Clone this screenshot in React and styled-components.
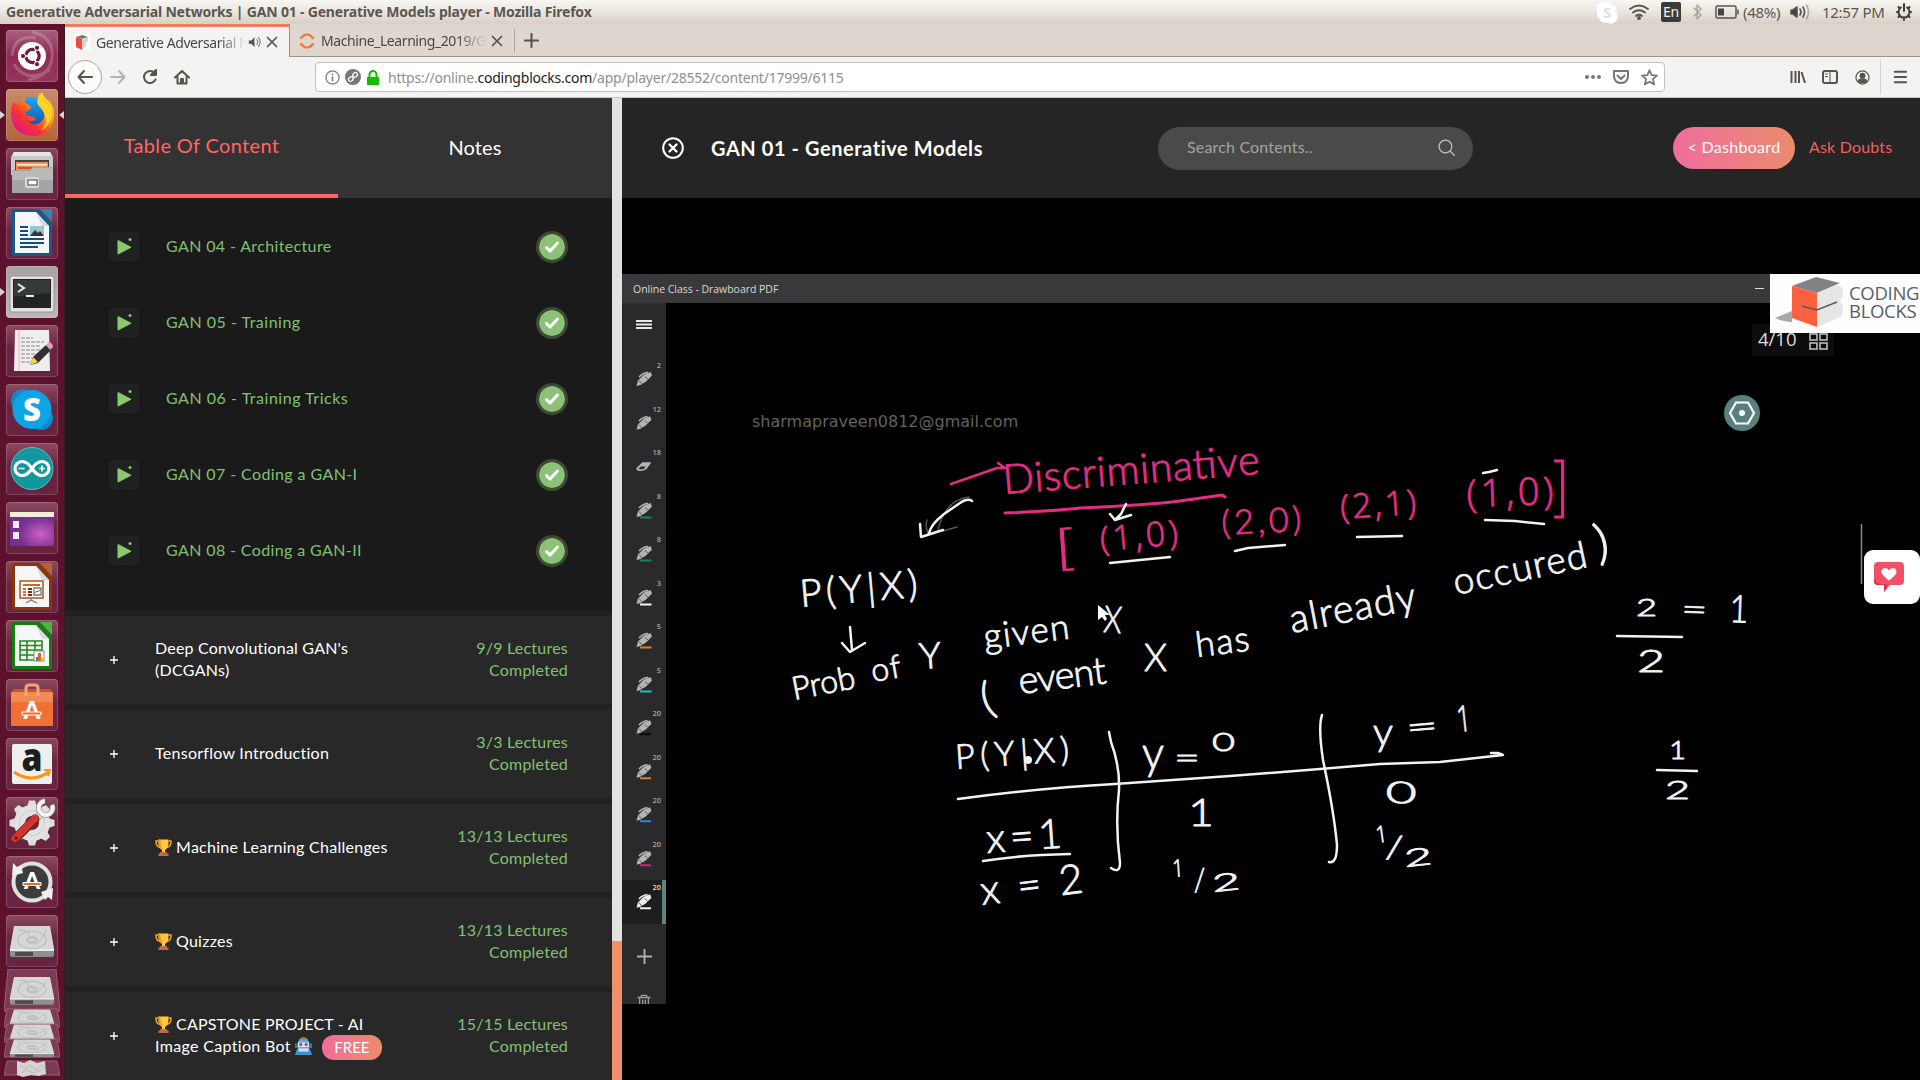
import React from "react";
import styled, { createGlobalStyle, css } from "styled-components";

const Global = createGlobalStyle`
  * { box-sizing: border-box; }
  body { margin: 0; background: #000; overflow: hidden; }
`;

const uiFont = `"Noto Sans", "Open Sans", sans-serif`;
const pageFont = `Lato, "Open Sans", sans-serif`;

/* ---------- desktop shell ---------- */

const Desktop = styled.div`
  width: 1920px;
  height: 1080px;
  display: grid;
  grid-template-rows: 24px 1056px;
  overflow: hidden;
  font-family: ${uiFont};
`;

const TopPanel = styled.header`
  display: flex;
  align-items: center;
  justify-content: space-between;
  padding: 0 8px 0 6px;
  background: linear-gradient(#f8f6f3, #ece7e1 45%, #d8cfc5);
  color: #5b5650;
`;

const WindowTitle = styled.div`
  font-size: 14px;
  font-weight: 700;
  line-height: 24px;
  letter-spacing: -0.19px;
  white-space: nowrap;
`;

const Indicators = styled.div`
  display: flex;
  align-items: center;
  height: 24px;
  font-size: 15px;
  letter-spacing: -0.3px;
  svg { display: block; }
`;

const Indicator = styled.span`
  display: flex;
  align-items: center;
  margin-left: ${(p) => p.$gap || 0}px;
  width: ${(p) => (p.$w ? p.$w + "px" : "auto")};
  white-space: nowrap;
`;

const LangBox = styled.span`
  width: 20px;
  height: 20px;
  margin-left: 12px;
  border-radius: 2px;
  background: #3c3b39;
  color: #f3f0ec;
  font-size: 14px;
  line-height: 20px;
  text-align: center;
`;

const Workspace = styled.div`
  display: grid;
  grid-template-columns: 65px 1855px;
  min-height: 0;
`;

const Launcher = styled.nav`
  display: flex;
  flex-direction: column;
  align-items: flex-start;
  gap: 7px;
  padding: 6px 0 0 6px;
  background: #5c112c;
  border-right: 1px solid #3c1622;
  overflow: hidden;
`;

const tileTones = {
  plain: "linear-gradient(#8b4a60, #6b2440 45%, #672340)",
  dash: "linear-gradient(#a8607c, #8e2c54 50%, #96365c)",
  firefox: "linear-gradient(#c98c6c, #b2643c)",
  terminal: "linear-gradient(#aaa0a4, #bdb6b9)",
};

const Tile = styled.div`
  position: relative;
  flex: none;
  width: 52px;
  height: 52px;
  border-radius: 4px;
  background: ${(p) => tileTones[p.$tone || "plain"]};
  box-shadow: inset 0 0 0 1px rgba(255, 255, 255, 0.17);
  svg { display: block; width: 52px; height: 52px; overflow: visible; }
`;

const Pip = styled.i`
  position: absolute;
  top: 22px;
  border: 4px solid transparent;
  ${(p) => p.$side === "left"
    ? css`left: -6px; border-left: 5px solid #d9d3d3; border-right: 0;`
    : css`right: -6px; border-right: 5px solid #d9d3d3; border-left: 0;`}
`;

const DriveStack = styled.svg`
  flex: none;
  margin: -5px 0 0 -2px;
`;

/* ---------- browser ---------- */

const Browser = styled.main`
  display: grid;
  grid-template-rows: 33px 41px 982px;
  min-width: 0;
`;

const TabStrip = styled.div`
  display: flex;
  background: #dfd6d0;
  border-bottom: 1px solid #99928d;
`;

const BrowserTab = styled.div`
  display: flex;
  align-items: center;
  width: ${(p) => p.$w}px;
  height: ${(p) => (p.$active ? 33 : 32)}px;
  padding: ${(p) => (p.$active ? "0 11px 0 9px" : "1px 11px 0 9px")};
  ${(p) => p.$active && css`
    background: #f4f3f2;
    border-top: 3px solid #ed7f58;
    border-right: 1px solid #99928d;
  `}
  svg { flex: none; }
`;

const TabLabel = styled.span`
  flex: none;
  width: ${(p) => p.$w}px;
  margin-left: 6px;
  overflow: hidden;
  white-space: nowrap;
  font-size: 14px;
  letter-spacing: -0.42px;
  color: #4a4744;
  mask-image: linear-gradient(90deg, #000 82%, transparent);
`;

const TabActions = styled.span`
  display: flex;
  align-items: center;
  gap: 5px;
  margin-left: auto;
`;

const TabDivider = styled.i`
  width: 1px;
  height: 24px;
  margin: 5px 8px 0 0;
  background: #aca49e;
`;

const PlusTab = styled.span`
  display: grid;
  place-items: center;
  width: 16px;
  height: 32px;
`;

const NavBar = styled.div`
  display: flex;
  align-items: center;
  background: #f4f3f1;
  border-bottom: 1px solid #c9c5c1;
  svg { flex: none; }
`;

const BackButton = styled.div`
  display: grid;
  place-items: center;
  width: 34px;
  height: 34px;
  margin-left: 3px;
  border: 1px solid #aaa6a2;
  border-radius: 50%;
  background: #fcfcfb;
`;

const NavIcon = styled.span`
  display: grid;
  place-items: center;
  width: 32px;
  height: 32px;
`;

const AddressBar = styled.div`
  display: flex;
  align-items: center;
  width: 1350px;
  height: 30px;
  margin-left: 117px;
  padding: 0 6px 0 9px;
  background: #fff;
  border: 1px solid #c3bfbb;
  border-radius: 4px;
`;

const UrlText = styled.span`
  flex: 1;
  margin-left: 8px;
  font-size: 14px;
  letter-spacing: -0.23px;
  color: #8f8f8f;
  b { font-weight: 400; color: #222; }
`;

const UrlActions = styled.span`
  display: flex;
  align-items: center;
  gap: 12px;
`;

const NavTail = styled.div`
  display: flex;
  align-items: center;
  margin-left: 117px;
`;

const NavSeparator = styled.i`
  width: 1px;
  height: 34px;
  margin: 0 3px 0 2px;
  background: #d6d3d0;
`;

/* ---------- course page ---------- */

const Page = styled.div`
  display: grid;
  grid-template-columns: 547px 10px 1298px;
  min-height: 0;
  font-family: ${pageFont};
`;

const Sidebar = styled.aside`
  display: flex;
  flex-direction: column;
  overflow: hidden;
  background: #282828;
`;

const SideTabs = styled.div`
  display: flex;
  flex: none;
  height: 100px;
  background: #333;
`;

const SideTab = styled.div`
  display: flex;
  align-items: center;
  justify-content: center;
  width: ${(p) => (p.$active ? 273 : 274)}px;
  padding-bottom: 2px;
  font-size: 20px;
  letter-spacing: ${(p) => (p.$active ? "0.35px" : "0.1px")};
  color: ${(p) => (p.$active ? "#ff6666" : "#fff")};
  border-bottom: ${(p) => (p.$active ? "4px solid #ff6666" : "0")};
`;

const LessonList = styled.div`
  flex: none;
  height: 412px;
  padding-top: 10px;
  background: #1a1a1a;
`;

const Lesson = styled.div`
  display: flex;
  align-items: center;
  height: 76px;
  padding: 0 44px;
  color: #82c073;
  font-size: 16px;
`;

const PlayBox = styled.span`
  display: grid;
  place-items: center;
  width: 30px;
  height: 29px;
  border-radius: 5px;
  background: #202121;
`;

const LessonName = styled.span`
  flex: 1;
  margin: -2px 0 0 27px;
  letter-spacing: ${(p) => p.$track}px;
`;

const DoneBadge = styled.span`
  display: grid;
  place-items: center;
  width: 32px;
  height: 32px;
  margin-top: 2px;
  border-radius: 50%;
  border: 3px solid #3d4b36;
  background: #8dc178;
  background-clip: padding-box;
`;

const Section = styled.div`
  display: flex;
  align-items: center;
  flex: none;
  height: 94px;
  padding: 0 44px 2px 45px;
  border-top: 6px solid #212121;
  background: #282828;
  color: #fff;
  font-size: 16px;
  line-height: 22px;
`;

const Expand = styled.span`
  width: 45px;
  padding-top: 1px;
  svg { display: block; }
`;

const SectionTitle = styled.div`
  flex: 1;
`;

const TitleLine = styled.div`
  display: flex;
  align-items: center;
  height: 22px;
  letter-spacing: ${(p) => p.$track || 0.22}px;
  white-space: pre;
  > svg { flex: none; margin-right: 4px; }
`;

const Progress = styled.div`
  width: 120px;
  text-align: right;
  letter-spacing: 0.22px;
  color: #82c073;
`;

const FreeBadge = styled.span`
  height: 25px;
  margin: 2px 0 0 6px;
  padding: 0 12px;
  border-radius: 12px;
  background: linear-gradient(90deg, #ee6e9d, #ec8b6c);
  font-size: 15px;
  line-height: 24px;
  letter-spacing: 0;
`;

const ScrollTrack = styled.div`
  display: flex;
  flex-direction: column;
  justify-content: flex-end;
  background: #e3e2e1;
`;

const ScrollThumb = styled.div`
  height: 139px;
  background: #f08f69;
`;

const Player = styled.section`
  display: flex;
  flex-direction: column;
  background: #000;
  min-width: 0;
`;

const PlayerHeader = styled.header`
  display: flex;
  align-items: center;
  height: 100px;
  padding-left: 40px;
  background: #252525;
`;

const LectureTitle = styled.h1`
  width: 447px;
  margin: -1px 0 0 27px;
  font-size: 20px;
  font-weight: 700;
  letter-spacing: 0.56px;
  color: #fff;
`;

const SearchBox = styled.div`
  display: flex;
  align-items: center;
  justify-content: space-between;
  width: 315px;
  height: 43px;
  padding: 0 18px 2px 29px;
  border-radius: 22px;
  background: #4a4a4a;
  color: #a3a3a3;
  font-size: 16px;
  line-height: 20px;
  letter-spacing: 0.17px;
`;

const DashboardButton = styled.div`
  width: 122px;
  height: 42px;
  margin-left: 200px;
  border-radius: 21px;
  background: linear-gradient(90deg, #ee6e9d, #ec8b6c);
  color: #fff;
  font-size: 16px;
  line-height: 40px;
  letter-spacing: 0.3px;
  text-align: center;
  white-space: nowrap;
`;

const AskLink = styled.div`
  margin: -3px 0 0 14px;
  color: #f0605e;
  font-size: 16px;
  letter-spacing: 0.18px;
  white-space: nowrap;
`;

const Video = styled.div`
  position: relative;
  flex: 1;
  padding-top: 76px;
  background: #000;
`;

const BoardTitle = styled.div`
  display: flex;
  align-items: center;
  height: 29px;
  padding-left: 11px;
  background: #39393b;
  color: #d8d8d8;
  font-family: "Open Sans", sans-serif;
  font-size: 10.5px;
  letter-spacing: -0.03px;
`;

const Minimize = styled.i`
  width: 9px;
  height: 1px;
  margin-left: auto;
  margin-right: 156px;
  background: #ddd;
`;

const Board = styled.div`
  display: grid;
  grid-template-columns: 44px 1254px;
  height: 701px;
`;

const ToolRail = styled.div`
  display: flex;
  flex-direction: column;
  overflow: hidden;
  background: #2a2a2c;
`;

const RailTop = styled.div`
  flex: none;
  display: grid;
  place-items: center;
  height: ${(p) => p.$h}px;
`;

const Tool = styled.div`
  display: flex;
  flex: none;
  align-items: flex-start;
  justify-content: space-between;
  height: 43.5px;
  padding: 3px 5px 0 14px;
  color: #a5a5a5;
  font-family: "Open Sans", sans-serif;
  font-size: 7.5px;
  font-weight: 600;
  line-height: 9px;
  ${(p) => p.$active && css`
    background: #1e1e1f;
    color: #ddd;
    border-right: 4px solid #5b8583;
    padding-right: 1px;
  `}
  svg { margin-top: 10px; }
`;

const Overlay = styled.div`
  position: absolute;
  left: ${(p) => p.$x}px;
  top: ${(p) => p.$y}px;
`;

const Watermark = styled(Overlay)`
  font-family: "DejaVu Sans", sans-serif;
  font-size: 16px;
  line-height: 20px;
  color: #626262;
`;

const PageCounter = styled(Overlay)`
  display: flex;
  align-items: flex-start;
  gap: 12px;
  width: 82px;
  height: 32px;
  padding-left: 6px;
  background: #0d0d0d;
  color: #dedede;
  font-family: "Open Sans", sans-serif;
  font-size: 18.5px;
  line-height: 29px;
  svg { margin-top: 9px; }
`;

const BrandCard = styled(Overlay)`
  display: flex;
  align-items: center;
  width: 150px;
  height: 59px;
  padding-bottom: 3px;
  background: #fefefe;
`;

const BrandName = styled.div`
  margin-left: 6px;
  color: #595d69;
  font-family: "Open Sans", sans-serif;
  font-size: 18.5px;
  line-height: 18px;
  letter-spacing: -0.3px;
  white-space: pre-line;
`;

const FeedbackCard = styled(Overlay)`
  display: flex;
  align-items: center;
  width: 56px;
  height: 54px;
  padding-left: 10px;
  border-radius: 9px;
  background: #fff;
`;

/* ---------- launcher art ---------- */

const Drive = ({ y = 0, s = 1 }) => (
  <g transform={`translate(0 ${y}) scale(1 ${s})`}>
    <path d="M8 12h36l4 22v6q0 2-2 2H6q-2 0-2-2v-6z" fill="#8f8f8f" />
    <path d="M8 11h36l4 23H4z" fill="#d6d6d6" />
    <path d="M4 34h44v2H4z" fill="#ececec" />
    <path d="M9 37h18v4H9z" fill="#4b4b4b" />
    <ellipse cx="26" cy="25" rx="14" ry="9" fill="none" stroke="#bdbdbd" strokeWidth="1.2" />
    <ellipse cx="26" cy="25" rx="5" ry="3" fill="#cfcfcf" stroke="#a6a6a6" />
    <path d="M12 15q14 0 10 6M40 15q-4 12-12 15" fill="none" stroke="#b9b9b9" />
  </g>
);

const OfficeSheet = ({ color, corner, children }) => (
  <g>
    <path d="M8 2h25l13 14v33H8q-2 0-2-2V4q0-2 2-2z" fill={color} />
    <path d="M34 2h12v13z" fill={corner} />
    <path d="M9 5h21l13 14v27H9z" fill="#f6f6f6" />
    <path d="M30 5l13 14h-7z" fill="#ccd" opacity=".7" />
    {children}
  </g>
);

const gearTeeth = [0, 45, 90, 135, 180, 225, 270, 315];

const art = {
  dash: (
    <g>
      <path d="M26 2Q48 6 46 28Q44 46 22 50M6 26Q8 4 30 8M44 40Q20 54 8 34" fill="none" stroke="#fff" strokeWidth="3" opacity=".2" />
      <circle cx="26" cy="26" r="14" fill="#fff" />
      <circle cx="26.5" cy="26" r="6.7" fill="none" stroke="#6c1f40" strokeWidth="3.2" />
      <path d="M26.5 26L18 26M26.5 26L31 18.500M26.500 26L31 33.500" stroke="#fff" strokeWidth="1.500" />
      <circle cx="26.500" cy="26" r="4.500" fill="#fff" />
      <g fill="#6c1f40" stroke="#fff" strokeWidth="1"><circle cx="17" cy="26" r="2.600" /><circle cx="31" cy="17.800" r="2.600" /><circle cx="31" cy="34.200" r="2.600" /></g>
    </g>
  ),
  firefox: (
    <g>
      <defs>
        <linearGradient id="fx" x1="0.9" y1="0.1" x2="0.2" y2="0.9"><stop offset="0" stopColor="#ffe226" /><stop offset=".35" stopColor="#ff9a1a" /><stop offset=".7" stopColor="#f8352f" /><stop offset="1" stopColor="#e01a80" /></linearGradient>
        <linearGradient id="fb" x1="0" y1="0" x2="0" y2="1"><stop offset="0" stopColor="#16aaf5" /><stop offset="1" stopColor="#1e3796" /></linearGradient>
      </defs>
      <circle cx="26" cy="27" r="19" fill="url(#fb)" />
      <path d="M7 12q2 3 4 3q4-5 9-6q-2 3-1 5q4 1 6 4q0 3-5 4q-2 4 3 5q4 0 7 3q-4 4-9 1q5 7 13 3q7-5 3-14q-2-4-6-6q0-6 5-11q2 6 7 9q6 6 5 16q-2 19-21 19q-21-1-22-22q0-7 2-13z" fill="url(#fx)" />
      <path d="M34 4q2 6 7 10q7 7 4 17q-4 8-10 10q8-8 3-17q-3-5-6-8q-1-7 2-12z" fill="#ffd927" opacity=".85" />
    </g>
  ),
  files: (
    <g>
      <path d="M8 4h36l3 5v18H5V9z" fill="#c9c9c7" /><path d="M8 4h36l2 4H6z" fill="#e6e6e4" />
      <path d="M9 12h34v11H9z" fill="#474340" /><path d="M10 14h32v8H10z" fill="#ec9156" /><path d="M11 16h30v1.500H11z" fill="#fff3e2" /><path d="M12 19h28v2H12z" fill="#c9532b" />
      <path d="M6 22h17l4-3h20v26H6z" fill="#a5a5a3" /><path d="M6 23h18l3-3h20v12H6z" fill="#b9b9b7" />
      <rect x="19" y="29" width="14" height="11" rx="2" fill="#d8d8d6" /><rect x="22" y="32" width="9" height="5" fill="#fff" stroke="#444" />
    </g>
  ),
  writer: (
    <OfficeSheet color="#155a8a" corner="#3483b0">
      <path d="M14 20h8M14 24h8M14 28h8M14 32h24M14 36h24M14 40h18" stroke="#12507e" strokeWidth="2" />
      <rect x="24" y="19" width="14" height="10" fill="#8cc6e8" /><path d="M24 29l5-6 3 3 2-2 4 5z" fill="#333" /><circle cx="34" cy="22" r="1.500" fill="#f5b93c" />
    </OfficeSheet>
  ),
  terminal: (
    <g>
      <rect x="4" y="10" width="44" height="36" rx="2" fill="#e2e0e0" stroke="#99959a" /><rect x="7" y="13" width="38" height="29" fill="#222424" />
      <path d="M8 14h36v13L8 31z" fill="#41484a" opacity=".6" /><path d="M12 18l6 4-6 4" fill="none" stroke="#eee" strokeWidth="2" /><path d="M20 30h8" stroke="#eee" strokeWidth="2" />
    </g>
  ),
  editor: (
    <g>
      <path d="M9 5h34l1 41H8z" fill="#eee" /><path d="M13 5v41" stroke="#f5b3b3" />
      <path d="M15 13h12M15 17h23M15 21h20M15 25h22M15 29h18M15 33h13M15 37h10" stroke="#aaa" strokeWidth="1.300" strokeDasharray="4 1" />
      <path d="M24 40l3-8 13-12 5 5-13 13z" fill="#303030" /><path d="M24 40l3-8 5 5z" fill="#f0d34c" /><path d="M40 20l3-3q4 1 4 5l-3 3z" fill="#eb9bc0" />
    </g>
  ),
  skype: (
    <g>
      <circle cx="17" cy="17" r="12" fill="#1388c8" /><circle cx="35" cy="34" r="12" fill="#1388c8" /><circle cx="26" cy="25.500" r="19.500" fill="#0ea5e6" />
      <text x="26" y="37" textAnchor="middle" fontFamily="Open Sans" fontWeight="800" fontSize="31" fill="#fff">S</text>
    </g>
  ),
  arduino: (
    <g>
      <circle cx="26" cy="25.500" r="21" fill="#12979c" stroke="#5fbcc0" />
      <path d="M26 25.500c-4-6-7-7-10-7a7 7 0 000 14c3 0 6-1 10-7s7-7 10-7a7 7 0 010 14c-3 0-6-1-10-7z" fill="none" stroke="#fff" strokeWidth="3.200" />
      <path d="M12.500 25.500h6M33 25.500h6M36 22.500v6" stroke="#fff" strokeWidth="1.600" />
    </g>
  ),
  desktops: (
    <g>
      <defs><radialGradient id="dk" cx=".7" cy=".65"><stop offset="0" stopColor="#cf5fc3" /><stop offset="1" stopColor="#743091" /></radialGradient></defs>
      <rect x="4" y="10" width="44" height="34" fill="url(#dk)" /><path d="M4 10h44v5H4z" fill="#f0edd8" />
      <path d="M7 19h6v7H7zM7 30h6v7H7z" fill="#f2eef2" />
    </g>
  ),
  impress: (
    <OfficeSheet color="#89360d" corner="#b56530">
      <rect x="14" y="20" width="23" height="17" fill="#fff" stroke="#b5521d" strokeWidth="1.500" /><path d="M17 24h17M17 28h3M17 31h3M17 34h3" stroke="#cc6630" strokeWidth="1.800" /><path d="M22 28h4M22 31h4M22 34h4" stroke="#7c2e0a" strokeWidth="1.800" />
      <path d="M28 34v-7h7v7zM25 37v2l-5 3M25 39l6 3" fill="none" stroke="#777" strokeWidth="1.300" /><path d="M29 32l2-2 1 1 3-3" stroke="#2b9d2b" fill="none" />
    </OfficeSheet>
  ),
  calc: (
    <OfficeSheet color="#118011" corner="#52b33c">
      <path d="M14 21h22v19H14zM14 25.500h22M14 30h22M14 35h22M21 21v19M29 21v19" fill="none" stroke="#1f8c1f" strokeWidth="1.600" />
      <rect x="28" y="31" width="10" height="10" fill="#fff" stroke="#888" /><path d="M30 41v-4h2v4z" fill="#3a85d0" /><path d="M32 41v-8h3v8z" fill="#e8641c" /><path d="M35 41v-3h2v3z" fill="#f5c211" />
    </OfficeSheet>
  ),
  software: (
    <g>
      <path d="M5 13h42v34H5z" fill="#ef7135" /><path d="M5 13h42v10H5z" fill="#f28a55" /><path d="M5 13l3-3h36l3 3z" fill="#c85420" />
      <path d="M20 17V9q0-3 3-3h6q3 0 3 3v8" fill="none" stroke="#f7a27a" strokeWidth="3" />
      <text x="26" y="40" textAnchor="middle" fontFamily="Lato" fontWeight="900" fontSize="24" fill="#fff">A</text><path d="M16 33h19v3H16z" fill="#f0642a" stroke="#fff" />
    </g>
  ),
  amazon: (
    <g>
      <rect x="6" y="6" width="40" height="40" rx="2" fill="#efefef" />
      <text x="26" y="33" textAnchor="middle" fontFamily="Open Sans" fontWeight="800" fontSize="38" fill="#1d1d1d" textLength="21" lengthAdjust="spacingAndGlyphs">a</text>
      <path d="M8 34Q25 46 43 34" fill="none" stroke="#f9960c" strokeWidth="3" /><path d="M38 32h6l-2 6" fill="none" stroke="#f9960c" strokeWidth="2" />
    </g>
  ),
  settings: (
    <g>
      {gearTeeth.map((a) => <path key={a} d="M21 10l2-6.500h6l2 6.500z" fill="#dedede" transform={`rotate(${a} 26 26)`} />)}
      <circle cx="26" cy="26" r="12.500" fill="none" stroke="#e2e2e2" strokeWidth="11" /><circle cx="26" cy="26" r="12.500" fill="none" stroke="#cbcbcb" strokeWidth="1" />
      <path d="M31 21l6-6" stroke="#aaa" strokeWidth="7" /><path d="M31 21l6-6" stroke="#f1f1f1" strokeWidth="5" />
      <path d="M46 8a7 7 0 11-7-4" fill="none" stroke="#999" strokeWidth="5.500" /><path d="M46 8a7 7 0 11-7-4" fill="none" stroke="#f3f3f3" strokeWidth="4" />
      <path d="M9 42L29 22" stroke="#7f1c18" strokeWidth="9" strokeLinecap="round" /><path d="M9 41.500L29 21.500" stroke="#d0362e" strokeWidth="7" strokeLinecap="round" /><circle cx="10" cy="41" r="1.500" fill="#601" />
    </g>
  ),
  updater: (
    <g>
      <circle cx="26" cy="26" r="18.500" fill="#3c3c3c" stroke="#e0e0e0" strokeWidth="4" />
      <path d="M6 20l1-13 4 4 4-2 2 8zM47 32l-1 12-4-3-3 3-4-8z" fill="#f0f0f0" />
      <text x="26" y="33" textAnchor="middle" fontFamily="Lato" fontWeight="900" fontSize="23" fill="#fff">A</text><path d="M17 26.500h18v3H17z" fill="#ef6a2c" stroke="#fff" />
    </g>
  ),
  drive: <Drive />,
};

const launcherItems = [
  { id: "dash", tone: "dash" },
  { id: "firefox", tone: "firefox", running: true, focused: true },
  { id: "files" },
  { id: "writer" },
  { id: "terminal", tone: "terminal", running: true },
  { id: "editor" },
  { id: "skype" },
  { id: "arduino" },
  { id: "desktops" },
  { id: "impress" },
  { id: "calc" },
  { id: "software" },
  { id: "amazon" },
  { id: "settings" },
  { id: "updater" },
  { id: "drive" },
];

/* ---------- small icons ---------- */

const Line = ({ size = 16, w = size, h = size, box = "0 0 16 16", color = "#57534f", sw = 2, children }) => (
  <svg width={w} height={h} viewBox={box} fill="none" stroke={color} strokeWidth={sw} strokeLinecap="round" strokeLinejoin="round">{children}</svg>
);

const CloseX = () => <Line size={12}><path d="M2 2l12 12M14 2L2 14" strokeWidth="2.300" /></Line>;

const Trophy = () => (
  <svg width="17" height="17" viewBox="0 0 34 34">
    <path d="M7 4H2q-1 11 9 13M27 4h5q1 11-9 13" fill="none" stroke="#f0a52e" strokeWidth="3" />
    <path d="M7 1h20v9q-1 9-7 12v5h-6v-5Q8 19 7 10z" fill="#ffc83d" /><path d="M7 1h4q0 14 5 21l-2 0Q8 19 7 10z" fill="#e89a27" />
    <path d="M10 26h14v3h3v5H7v-5h3z" fill="#bf6a4e" />
  </svg>
);

const Robot = () => (
  <svg width="17" height="18" viewBox="0 0 34 36">
    <path d="M9 6Q17-3 25 6" fill="none" stroke="#b98a3c" strokeWidth="3" /><path d="M5 14Q5 4 17 4t12 10v12H5z" fill="#5aaceb" />
    <path d="M0 13h5v9H0zM29 13h5v9h-5z" fill="#3b78c2" /><path d="M6 11h22v9H6z" fill="#d8ecfa" />
    <circle cx="11.500" cy="15" r="3.500" fill="#e2405a" /><circle cx="22.500" cy="15" r="3.500" fill="#e2405a" />
    <path d="M3 26h28l3 10H0z" fill="#3f93d2" /><path d="M7 23h20v6H7z" fill="#cde6f7" />
  </svg>
);

const PlayMark = () => (
  <svg width="16" height="18" viewBox="0 0 16 18">
    <path d="M2 3.500L15 10.300 2 17z" fill="#8dc86f" stroke="#8dc86f" strokeLinejoin="round" />
    <circle cx="14" cy="2.500" r="1.500" fill="#8dc86f" />
  </svg>
);

const Pen = ({ color, bright }) => {
  const tone = bright ? "#eee" : "#b4b4b4";
  return (
    <svg width="17" height="17" viewBox="0 0 17 17">
      {color && <path d="M4 15.500h11.500" stroke={color} strokeWidth="2" />}
      <path d="M.5 15l1.500-5.500L8 3.500 14.500 1l1.500 3.500-6 6L4.500 14z" fill={tone} />
      <path d="M3 6Q7 1.500 12 1.500" fill="none" stroke={tone} strokeWidth="1.600" />
      <path d="M3 9.500l3 3.500M9 5.500l3 2.500" stroke={bright ? "#444" : "#555"} strokeWidth=".9" />
    </svg>
  );
};

const Eraser = () => (
  <svg width="17" height="17" viewBox="0 0 17 17">
    <path d="M.5 10l6-6H16l-5 7q-5.500 3.500-10.500 1z" fill="#b4b4b4" /><path d="M2.500 10.500l2.500-2h5l-2 2.500q-3 1-5.500-.5z" fill="#2a2a2c" />
  </svg>
);

const tools = [
  { n: "2" },
  { n: "12" },
  { n: "18", eraser: true },
  { n: "8", color: "#15884f" },
  { n: "8", color: "#15884f" },
  { n: "3", color: "#f2f2f2" },
  { n: "5", color: "#e1812a" },
  { n: "5", color: "#1bbccb" },
  { n: "20", color: "#050505" },
  { n: "20", color: "#e1812a" },
  { n: "20", color: "#1e93dd" },
  { n: "20", color: "#cc2573" },
  { n: "20", color: "#f5f5f5", active: true },
];

/* ---------- whiteboard ---------- */

const InkText = styled.text`
  font-family: ${(p) => (p.$plain ? '"Open Sans"' : "Lato")}, sans-serif;
  font-weight: 300;
  font-size: ${(p) => p.$size}px;
  fill: ${(p) => (p.$pink ? "#e22d82" : "#f2f2f2")};
  stroke: ${(p) => (p.$pink ? "#e22d82" : "#f2f2f2")};
  stroke-width: 0.9px;
  stroke-linejoin: round;
`;

// [text, x, baseline y, width, font size, angle, pink, plain digits]
const notes = [
  ["Discriminative", 1004, 494, 257, 41, -4.5, 1],
  ["[", 1056, 565, 20, 48, -4, 1],
  ["(1,0)", 1101, 551, 78, 34, -5, 1, 1],
  ["(2,0)", 1222, 535, 80, 34, -3, 1],
  ["(2,1)", 1341, 519, 76, 34, -4, 1, 1],
  ["(1,0)", 1467, 507, 87, 38, -2, 1, 1],
  ["]", 1552, 509, 18, 66, 0, 1],
  ["P(Y|X)", 801, 607, 118, 38, -5],
  ["Prob", 794, 700, 64, 32, -11],
  ["of", 873, 682, 30, 32, -10],
  ["Y", 920, 669, 22, 36, -4],
  ["given", 985, 649, 86, 35, -7],
  ["X", 1103, 632, 18, 37, 4],
  ["(", 986, 715, 12, 44, -18],
  ["event", 1020, 694, 88, 38, -7],
  ["X", 1144, 671, 23, 37, 0],
  ["has", 1197, 657, 54, 35, -7],
  ["already", 1292, 633, 128, 39, -11],
  ["occured", 1456, 595, 136, 37, -12],
  [")", 1598, 560, 14, 48, -12],
  ["2", 1636, 616, 21, 24, 0],
  ["=", 1681, 620, 26, 32, 2],
  ["1", 1729, 622, 19, 38, 2],
  ["2", 1637, 672, 28, 31, 0],
  ["1", 1669, 759, 17, 25, 0],
  ["2", 1665, 799, 25, 25, 0],
  ["P(Y|X)", 956, 769, 114, 34, -4],
  ["y", 1142, 769, 22, 46, 0],
  ["=", 1174, 769, 26, 32, 0],
  ["0", 1212, 751, 23, 26, 0],
  ["y", 1373, 745, 20, 38, 0],
  ["=", 1407, 739, 32, 32, -5],
  ["1", 1458, 732, 14, 36, -6, 0, 1],
  ["1", 1188, 826, 26, 37, 0],
  ["0", 1385, 802, 31, 30, 4],
  ["x=1", 987, 853, 76, 41, -4],
  ["x=2", 982, 905, 103, 41, -7],
  ["1", 1173, 877, 11, 24, -4, 0, 1],
  ["/", 1194, 891, 11, 31, 0],
  ["2", 1213, 892, 28, 24, -6],
  ["1", 1377, 843, 11, 23, -8, 0, 1],
  ["/", 1385, 858, 17, 32, 4],
  ["2", 1405, 867, 28, 24, -6],
];

const whiteStrokes = [
  "M1110 563L1170 557", "M1235 551L1248 548L1285 545", "M1357 537L1402 536", "M1483 473L1489 472L1497 470", "M1485 520L1515 521L1544 524",
  "M972 501Q968 498 960 503L944 514Q930 525 929 534", "M920 524L921 537L943 530", "M1126 504L1121 514L1115 520L1110 514M1115 520L1131 515",
  "M850 627L852 650M842 643L850 652L865 643",
  "M1617 636L1682 637", "M1657 770L1697 771",
  "M958 799Q1040 788 1115 784L1230 776L1320 769L1380 764L1440 762L1503 755L1498 753L1491 753",
  "M1109 732L1111 742Q1120 766 1119 790Q1115 825 1120 863Q1120 874 1111 868",
  "M1322 715Q1318 727 1323 760Q1334 812 1337 845Q1337 864 1329 862",
  "M983 861Q1020 855 1070 854",
];

const Whiteboard = () => (
  <svg width="1254" height="701" viewBox="666 303 1254 701">
    <g fill="none" strokeLinecap="round" strokeLinejoin="round">
      <path d="M928 534Q925 525 927 520M938 530Q945 500 969 497M957 527L943 531" stroke="#555" strokeWidth="1.500" />
      <path d="M951 484L997 468L1005 468L998 463" stroke="#e22d82" strokeWidth="2.500" />
      <path d="M1005 513Q1055 511 1080 508Q1150 505 1180 501L1222 495L1225 497" stroke="#e22d82" strokeWidth="3" />
      {whiteStrokes.map((d) => <path key={d} d={d} stroke="#f2f2f2" strokeWidth="2.500" />)}
    </g>
    {notes.map(([text, x, y, width, size, angle, pink, plain], i) => (
      <InkText
        key={i}
        $size={size}
        $pink={pink}
        $plain={plain}
        x={x}
        y={y}
        textLength={width}
        lengthAdjust={text.length > 1 ? "spacing" : "spacingAndGlyphs"}
        transform={`rotate(${angle} ${x} ${y})`}
      >
        {text}
      </InkText>
    ))}
    <path d="M1098 605v15l4-3 3 4 2-2-2-4h5z" fill="#fff" />
    <circle cx="1028" cy="760" r="4" fill="#f5f5f5" />
    <circle cx="1742" cy="413" r="18" fill="#57807f" />
    <path d="M1730 413l6-10.500h12l6 10.500-6 10.500h-12z" fill="none" stroke="#fff" strokeWidth="2.200" />
    <circle cx="1742" cy="413" r="3" fill="#fff" />
    <path d="M1861.500 524v60" stroke="#8a8a8a" strokeWidth="1.500" />
  </svg>
);

/* ---------- data ---------- */

const lessons = [
  { name: "GAN 04 - Architecture", track: 0.36 },
  { name: "GAN 05 - Training", track: 0.5 },
  { name: "GAN 06 - Training Tricks", track: 0.52 },
  { name: "GAN 07 - Coding a GAN-I", track: 0.4 },
  { name: "GAN 08 - Coding a GAN-II", track: 0.38 },
];

const sections = [
  { lines: [["Deep Convolutional GAN's", 0.2], ["(DCGANs)", 0.3]], count: "9/9" },
  { lines: [["Tensorflow Introduction", 0.27]], count: "3/3" },
  { lines: [["Machine Learning Challenges", 0.27]], count: "13/13", trophy: true },
  { lines: [["Quizzes", 0.25]], count: "13/13", trophy: true },
  { lines: [["CAPSTONE PROJECT - AI", 0.2], ["Image Caption Bot", 0.33]], count: "15/15", trophy: true, free: true },
];

const Cube = styled.svg`
  flex: none;
  margin-left: 5px;
`;

const LinkBadge = styled.svg`
  margin: 0 5px;
`;

const Hamburger = styled.svg`
  margin-top: -12px;
`;

const CubeLogo = () => (
  <Cube width="68" height="54" viewBox="0 0 68 54">
    <path d="M0 43L17 36V47Q5 46 0 43z" fill="#a7a7ab" />
    <path d="M17 11L41 2l24 6-23 10z" fill="#828286" /><path d="M17 11l25 7v34L17 43z" fill="#fb613f" />
    <path d="M42 18l20-8q6 1 6 8 0 6-4 8 4 2 4 8 0 7-5 9l-21 9z" fill="#e6e6e8" />
    <path d="M27 31l15 4 20-8" fill="none" stroke="#68545a" strokeWidth="1.500" />
  </Cube>
);

export default function App() {
  return (
    <Desktop>
      <Global />
      <TopPanel>
        <WindowTitle>Generative Adversarial Networks | GAN 01 - Generative Models player - Mozilla Firefox</WindowTitle>
        <Indicators>
          <svg width="22" height="23" viewBox="0 0 22 23"><path d="M7 1q3-1 6 1 8 2 8 10 2 5-1 8-3 4-8 2Q2 22 1 12-1 3 7 1z" fill="#fff" /><text x="11" y="17" textAnchor="middle" fontFamily="Noto Sans" fontWeight="700" fontSize="15" fill="#e6dfd6">S</text></svg>
          <Indicator $gap={11}><Line w={20} h={16} box="0 0 20 16"><path d="M1 5Q10-2 19 5M4 8.500Q10 4 16 8.500M7 12Q10 9.500 13 12" strokeWidth="1.800" /><circle cx="10" cy="14" r="1" fill="#444" /></Line></Indicator>
          <LangBox>En</LangBox>
          <Indicator $gap={12}><Line w={9} h={18} box="0 0 9 18" color="#aaa49d" sw={1.5}><path d="M1 5l7 7-4 4V2l4 4-7 7" /></Line></Indicator>
          <Indicator $gap={13}><Line w={24} h={14} box="0 0 24 14" sw={1.5}><rect x="1" y="1" width="20" height="12" rx="1.500" /><path d="M3 3.500h6v7H3z" fill="#444" stroke="none" /><path d="M23 5v4" /></Line></Indicator>
          <Indicator $gap={4} $w={36}>(48%)</Indicator>
          <Indicator $gap={11}><Line w={20} h={16} box="0 0 20 16" sw={1.6}><path d="M1 6h2l4-3v10l-4-3H1z" fill="#444" /><path d="M10 5q2 3 0 6M13 3q3 5 0 10" /><path d="M16.500 1q4 7 0 14" opacity=".4" /></Line></Indicator>
          <Indicator $gap={12} $w={62}>12:57 PM</Indicator>
          <Indicator $gap={12}><Line w={16} h={18} box="0 0 16 18" color="#3f3d3a" sw={2}><path d="M5 4.500a5.500 5.500 0 106 0M8 1v7" /><path d="M1 9h1M14 9h1M8 16v1M2.500 14l1-1M13.500 14l-1-1M2.500 4l1 1M13.500 4l-1 1" /></Line></Indicator>
        </Indicators>
      </TopPanel>

      <Workspace>
        <Launcher>
          {launcherItems.map((item) => (
            <Tile key={item.id} $tone={item.tone}>
              <svg viewBox="0 0 52 52">{art[item.id]}</svg>
              {item.running && <Pip $side="left" />}
              {item.focused && <Pip $side="right" />}
            </Tile>
          ))}
          <DriveStack width="56" height="111" viewBox="-2 0 56 111">
            <path d="M2 0h48l4 42H-2z" fill="#7d3a55" stroke="#9a6075" />
            <Drive y={-2} s={0.9} />
            {[34, 49, 64].map((y) => (
              <g key={y}><path d={`M1 ${y + 6}h50l3 18H-2z`} fill="#7d3a55" stroke="#9a6075" /><Drive y={y} s={0.58} /></g>
            ))}
            <path d="M1 92h50l3 14H-2z" fill="#7d3a55" stroke="#9a6075" />
            <path d="M11 92l7 2 6-3 7 3 8-2 1 13-7 2-8-1-8 2-6-2z" fill="#d4d4d1" />
            <path d="M14 96l5 4 5-4 6 5 5-5 4 4M15 104l6-3 6 3 8-3" fill="none" stroke="#b0b0ad" strokeWidth=".8" />
          </DriveStack>
        </Launcher>

        <Browser>
          <TabStrip>
            <BrowserTab $active $w={225}>
              <svg width="16" height="16" viewBox="0 0 16 16"><path d="M0 0h16v16H0z" fill="#fff" /><path d="M2 3l6-2 6 2-6 2z" fill="#777" /><path d="M2 3l6 2v11l-6-3z" fill="#ee4b3b" /><path d="M8 5l6-2v4l-2 2v3l-4 4z" fill="#d4d4d4" /></svg>
              <TabLabel $w={150}>Generative Adversarial Networks</TabLabel>
              <TabActions>
                <Line w={13} h={14} color="#777"><path d="M1 6h3l4-4v12l-4-4H1z" fill="#555" stroke="none" /><path d="M11 5q2 3 0 6M13 2.500q4 5.500 0 11" strokeWidth="1.300" /></Line>
                <CloseX />
              </TabActions>
            </BrowserTab>
            <BrowserTab $w={224}>
              <Line size={16} color="#f37726"><path d="M2 5Q8-2 14 5M2 11Q8 18 14 11" strokeWidth="2.200" /></Line>
              <TabLabel $w={166}>Machine_Learning_2019/GAN</TabLabel>
              <TabActions><CloseX /></TabActions>
            </BrowserTab>
            <TabDivider />
            <PlusTab><Line size={15} sw={2.2}><path d="M8 1v14M1 8h14" /></Line></PlusTab>
          </TabStrip>

          <NavBar>
            <BackButton><Line size={16}><path d="M15 8H1.500M7 2L1.500 8 7 14" /></Line></BackButton>
            <NavIcon><Line size={16} color="#b6b3b0"><path d="M1 8h13.500M9 2l5.500 6L9 14" /></Line></NavIcon>
            <NavIcon><Line size={16}><path d="M13.500 10.500A6 6 0 1112.500 4M14 1v5H9z" /></Line></NavIcon>
            <NavIcon><Line size={16}><path d="M1 8.500L8 2l7 6.500M3.500 8v6.500h9V8" /><path d="M7 14v-4h2v4z" /></Line></NavIcon>
            <AddressBar>
              <Line size={15} color="#777" sw={1.3}><circle cx="8" cy="8" r="7" /><path d="M8 7.500v4M8 4.500v.2" strokeWidth="1.700" /></Line>
              <LinkBadge width="16" height="16" viewBox="0 0 16 16"><circle cx="8" cy="8" r="8" fill="#777" /><g transform="rotate(-45 8 8)" fill="none" stroke="#fff" strokeWidth="1.300"><rect x="2.500" y="6" width="5" height="4" rx="2" /><rect x="8.500" y="6" width="5" height="4" rx="2" /></g></LinkBadge>
              <svg width="14" height="15" viewBox="0 0 14 15"><path d="M1 7h12v8H1z" fill="#12bc00" /><path d="M3.500 8V4.500a3.500 3.500 0 017 0V8" fill="none" stroke="#12bc00" strokeWidth="2" /></svg>
              <UrlText>https://online.<b>codingblocks.com</b>/app/player/28552/content/17999/6115</UrlText>
              <UrlActions>
                <svg width="16" height="4" viewBox="0 0 16 4" fill="#777"><circle cx="2" cy="2" r="2" /><circle cx="8" cy="2" r="2" /><circle cx="14" cy="2" r="2" /></svg>
                <Line size={16} color="#777"><path d="M1 2h14v6q-1 6-7 6T1 8zM4.500 6.500L8 10l3.500-3.500" /></Line>
                <Line size={17} color="#777" sw={1.7}><path d="M8 1l2 4.700 5 .5-3.800 3.300 1.200 5L8 12l-4.400 2.500 1.200-5L1 6.200l5-.5z" /></Line>
              </UrlActions>
            </AddressBar>
            <NavTail>
              <NavIcon><Line size={16} sw={2}><path d="M1.500 2v12M5.500 2v12M9 2v12M11.500 3l3.500 11" strokeLinecap="butt" /></Line></NavIcon>
              <NavIcon><Line size={16}><rect x="1" y="2" width="14" height="12" rx="2" /><path d="M8 2v12" strokeWidth="1" /><path d="M3.500 5h2M3.500 7.500h2" strokeWidth="1" /></Line></NavIcon>
              <NavIcon><Line size={15} sw={1.3}><circle cx="8" cy="8" r="7" /><circle cx="8" cy="6" r="2.500" fill="#57534f" /><path d="M3.500 12Q4 9.500 8 9.500t4.500 2.500Q8 15 3.500 12z" fill="#57534f" /></Line></NavIcon>
              <NavSeparator />
              <NavIcon><Line size={14} sw={2.3}><path d="M2 2h13M2 8h13M2 14h13" /></Line></NavIcon>
            </NavTail>
          </NavBar>

          <Page>
            <Sidebar>
              <SideTabs>
                <SideTab $active>Table Of Content</SideTab>
                <SideTab>Notes</SideTab>
              </SideTabs>
              <LessonList>
                {lessons.map(({ name, track }) => (
                  <Lesson key={name}>
                    <PlayBox><PlayMark /></PlayBox>
                    <LessonName $track={track}>{name}</LessonName>
                    <DoneBadge><Line w={16} h={14} box="0 0 16 14" color="#fff" sw={3}><path d="M2.500 7.500L6 11l7.500-8" /></Line></DoneBadge>
                  </Lesson>
                ))}
              </LessonList>
              {sections.map((s) => (
                <Section key={s.lines[0][0]}>
                  <Expand><Line size={8} color="#fff"><path d="M8 0v16M0 8h16" strokeWidth="2.600" /></Line></Expand>
                  <SectionTitle>
                    {s.lines.map(([line, track], i) => (
                      <TitleLine key={line} $track={track}>
                        {s.trophy && i === 0 && <Trophy />}
                        <span>{line}</span>
                        {s.free && i === 1 && <><span> </span><Robot /><FreeBadge>FREE</FreeBadge></>}
                      </TitleLine>
                    ))}
                  </SectionTitle>
                  <Progress>{`${s.count} Lectures Completed`}</Progress>
                </Section>
              ))}
            </Sidebar>
            <ScrollTrack><ScrollThumb /></ScrollTrack>

            <Player>
              <PlayerHeader>
                <Line size={22} box="0 0 22 22" color="#fff"><circle cx="11" cy="11" r="9.800" /><path d="M7.500 7.500l7 7M14.500 7.500l-7 7" strokeWidth="2.400" /></Line>
                <LectureTitle>GAN 01 - Generative Models</LectureTitle>
                <SearchBox>
                  Search Contents..
                  <Line size={17} color="#c0c0c0" sw={1.2}><circle cx="7" cy="7" r="6" /><path d="M11.500 11.500l4 4" /></Line>
                </SearchBox>
                <DashboardButton>&lt; Dashboard</DashboardButton>
                <AskLink>Ask Doubts</AskLink>
              </PlayerHeader>
              <Video>
                <BoardTitle>Online Class - Drawboard PDF<Minimize /></BoardTitle>
                <Board>
                  <ToolRail>
                    <RailTop $h={55}><Hamburger width="16" height="9" viewBox="0 0 16 9"><path d="M0 1h16M0 4.500h16M0 8h16" stroke="#e6e6e6" strokeWidth="1.800" /></Hamburger></RailTop>
                    {tools.map((t, i) => (
                      <Tool key={i} $active={t.active}>
                        {t.eraser ? <Eraser /> : <Pen color={t.color} bright={t.active} />}
                        {t.n}
                      </Tool>
                    ))}
                    <RailTop $h={66}><Line size={15} color="#b0b0b0"><path d="M8 0v16M0 8h16" /></Line></RailTop>
                    <RailTop $h={22}><Line size={14} color="#9a9a9a" sw={1.5}><path d="M1 4h14M5 4V1.500h6V4M3 4v12h10V4M6.500 7v7M9.500 7v7" /></Line></RailTop>
                  </ToolRail>
                  <Whiteboard />
                </Board>
                <Watermark $x={130} $y={214}>sharmapraveen0812@gmail.com</Watermark>
                <PageCounter $x={1130} $y={126}>
                  4/10
                  <svg width="19" height="17" viewBox="0 0 19 17" fill="none" stroke="#c8c8c8" strokeWidth="1.500"><path d="M1 1h7v6H1zM11 1h7v6h-7zM1 10h7v6H1zM11 10h7v6h-7z" /></svg>
                </PageCounter>
                <BrandCard $x={1148} $y={76}>
                  <CubeLogo />
                  <BrandName>{"CODING\nBLOCKS"}</BrandName>
                </BrandCard>
                <FeedbackCard $x={1242} $y={352}>
                  <svg width="30" height="30" viewBox="0 0 30 30"><path d="M4 0h22q4 0 4 4v15q0 4-4 4H16l-6 7v-7H4q-4 0-4-4V4q0-4 4-4z" fill="#ef5268" /><path d="M0 19q0 4 4 4h6v7l3-3.500V22H6q-4-1-5-5z" fill="#e03350" /><path d="M15 18.500Q7 12.500 7.500 9.500 8 6 11 6q3 0 4 2.500Q16 6 19 6t3.500 3.500Q23 12.500 15 18.500z" fill="#fff" /></svg>
                </FeedbackCard>
              </Video>
            </Player>
          </Page>
        </Browser>
      </Workspace>
    </Desktop>
  );
}
